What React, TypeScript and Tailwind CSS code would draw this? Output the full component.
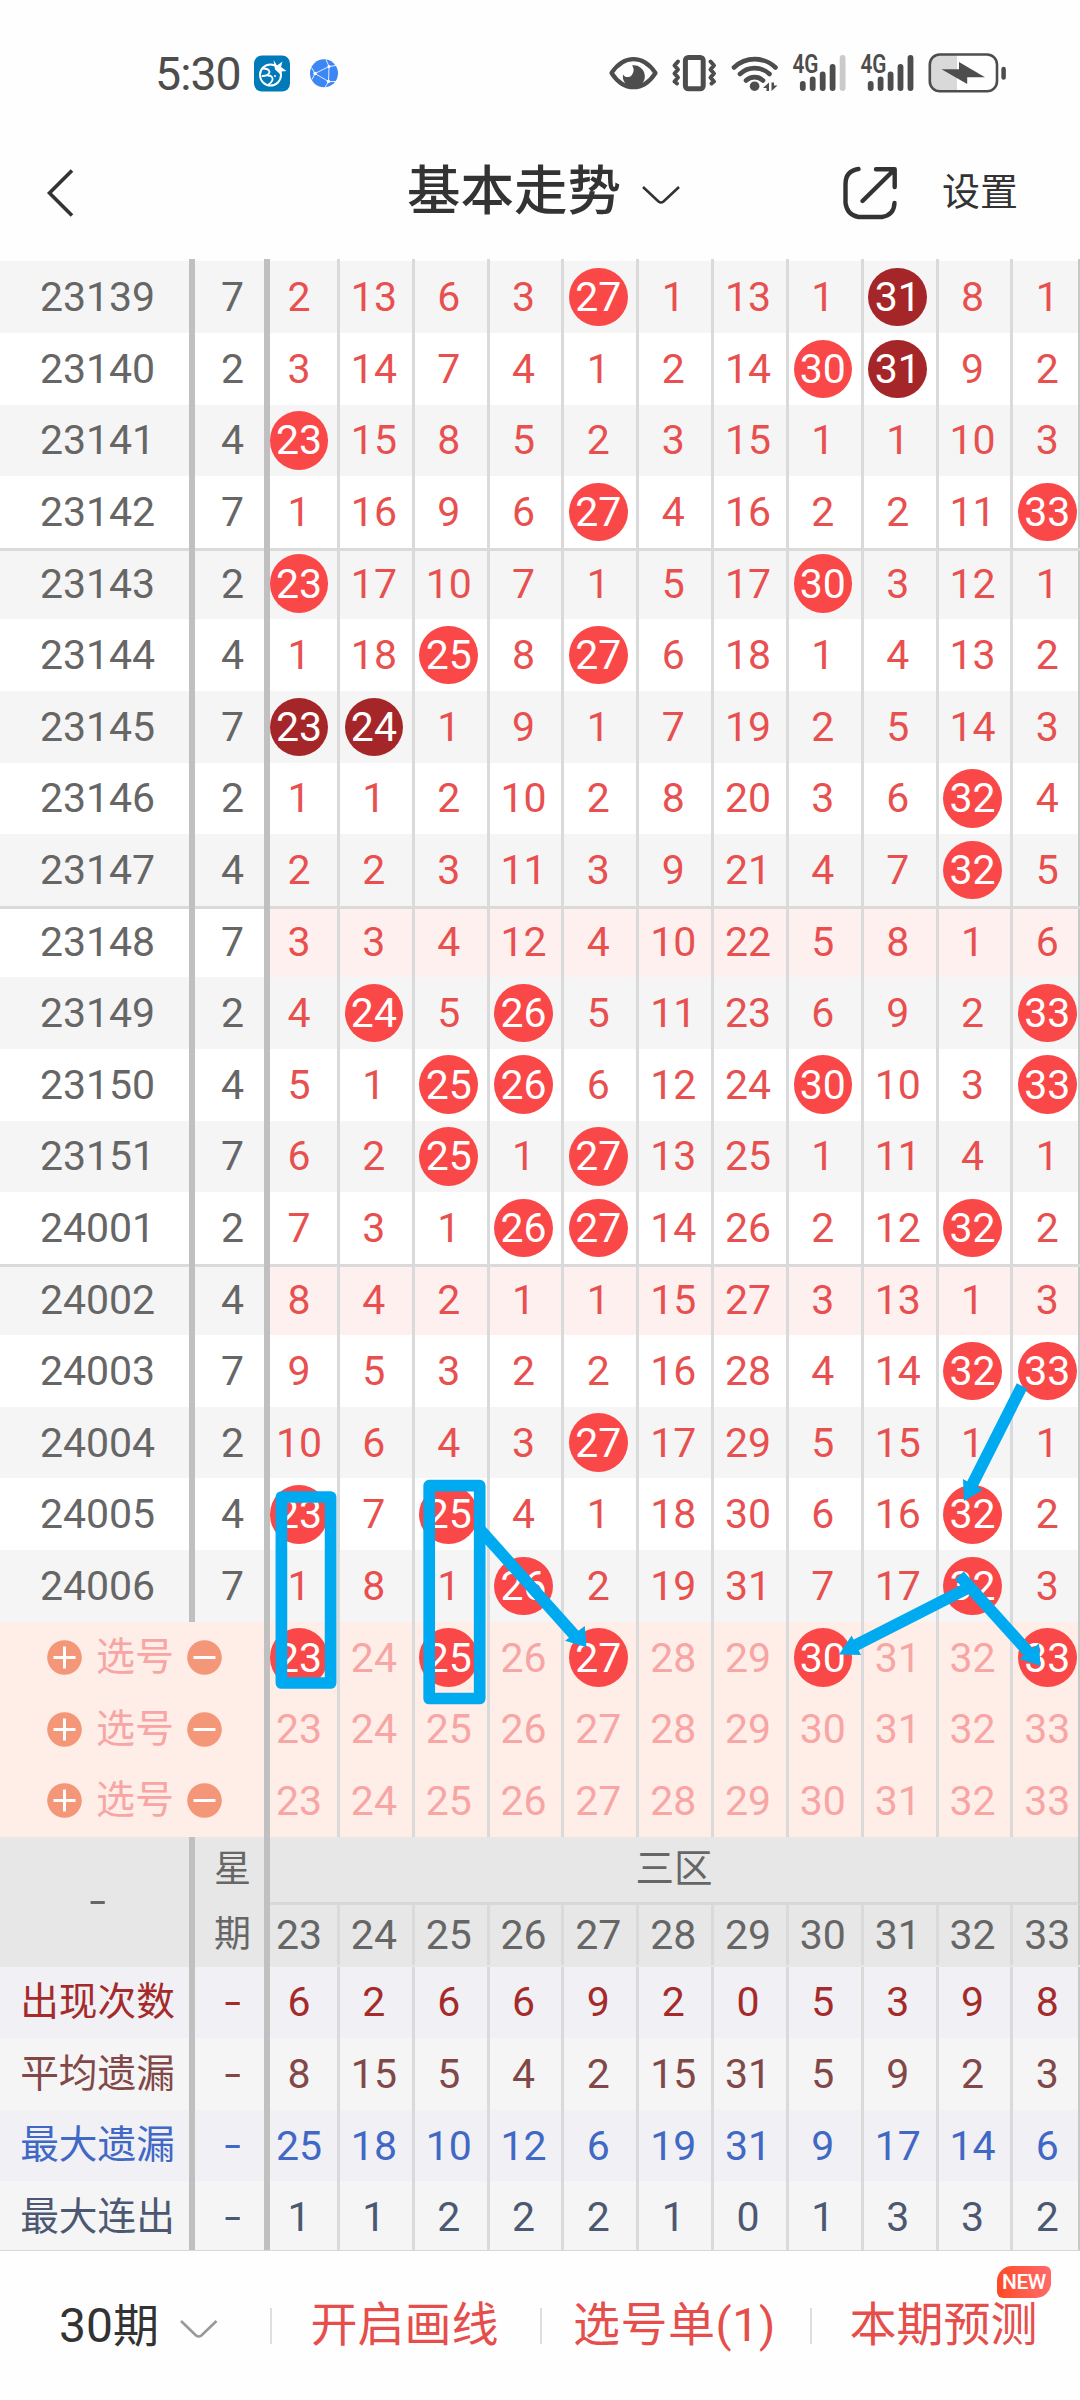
import React from "react";

const DIGITS = "font-[Roboto,'Noto_Sans_CJK_SC',sans-serif]";

/* A leading "*" marks a drawn ball, "#" a ball that belongs to a consecutive repeat. */
const DRAWS: string[] = [
  "23139 7 2 13 6 3 *27 1 13 1 #31 8 1",
  "23140 2 3 14 7 4 1 2 14 *30 #31 9 2",
  "23141 4 *23 15 8 5 2 3 15 1 1 10 3",
  "23142 7 1 16 9 6 *27 4 16 2 2 11 *33",
  "23143 2 *23 17 10 7 1 5 17 *30 3 12 1",
  "23144 4 1 18 *25 8 *27 6 18 1 4 13 2",
  "23145 7 #23 #24 1 9 1 7 19 2 5 14 3",
  "23146 2 1 1 2 10 2 8 20 3 6 *32 4",
  "23147 4 2 2 3 11 3 9 21 4 7 *32 5",
  "23148 7 3 3 4 12 4 10 22 5 8 1 6",
  "23149 2 4 *24 5 *26 5 11 23 6 9 2 *33",
  "23150 4 5 1 *25 *26 6 12 24 *30 10 3 *33",
  "23151 7 6 2 *25 1 *27 13 25 1 11 4 1",
  "24001 2 7 3 1 *26 *27 14 26 2 12 *32 2",
  "24002 4 8 4 2 1 1 15 27 3 13 1 3",
  "24003 7 9 5 3 2 2 16 28 4 14 *32 *33",
  "24004 2 10 6 4 3 *27 17 29 5 15 1 1",
  "24005 4 *23 7 *25 4 1 18 30 6 16 *32 2",
  "24006 7 1 8 1 *26 2 19 31 7 17 *32 3",
];

const PICKS: string[] = [
  "*23 24 *25 26 *27 28 29 *30 31 32 *33",
  "23 24 25 26 27 28 29 30 31 32 33",
  "23 24 25 26 27 28 29 30 31 32 33",
];

const STATS = [
  { label: "出现次数", color: "text-[#a52a2a]", bg: "bg-[#f0f0f5]", v: "6 2 6 6 9 2 0 5 3 9 8" },
  { label: "平均遗漏", color: "text-[#824848]", bg: "bg-[#f5f5f5]", v: "8 15 5 4 2 15 31 5 9 2 3" },
  { label: "最大遗漏", color: "text-[#4068c4]", bg: "bg-[#f0f0f5]", v: "25 18 10 12 6 19 31 9 17 14 6" },
  { label: "最大连出", color: "text-[#4c5872]", bg: "bg-[#f5f5f5]", v: "1 1 2 2 2 1 0 1 3 3 2" },
];

function Cells({ values, bg, color }: { values: string[]; bg: string; color: string }) {
  return (
    <div className={`flex min-w-0 flex-1 overflow-hidden border-r-2 border-[#c8c8c8] ${bg} ${color}`}>
      {values.map((v, i) => {
        const mark = v[0];
        const ball = mark === "*" || mark === "#";
        return (
          <div
            key={i}
            className={`flex h-full shrink-0 items-center border-[#dadada] ${
              i === 0 ? "w-[69.9px] border-r-[3px]" : i === 10 ? "w-[68px]" : "w-[74.84px] border-r-[3px]"
            }`}
          >
            <div className={`flex shrink-0 justify-center ${i === 0 ? "w-[58px]" : "w-[68px]"}`}>
              {ball ? (
                <span
                  className={`flex size-[58.5px] shrink-0 items-center justify-center rounded-full text-white ${
                    mark === "#" ? "bg-[#a52629]" : "bg-[#fa4848]"
                  }`}
                >
                  <span className="pt-px">{v.slice(1)}</span>
                </span>
              ) : (
                <span className="pt-px">{v}</span>
              )}
            </div>
          </div>
        );
      })}
    </div>
  );
}

function Lead({ a, b, bg, color }: { a: string; b: string; bg: string; color: string }) {
  return (
    <div className={`flex w-[270px] shrink-0 ${bg} ${color}`}>
      <div className="flex w-[195px] items-center justify-center border-r-[6px] border-[#c0c0c0] pl-[6px] pt-px">{a}</div>
      <div className="flex w-[75px] items-center justify-center border-r-[6px] border-[#c0c0c0] pl-[6px] pt-px">{b}</div>
    </div>
  );
}

function Dash() {
  return <span className="inline-block scale-x-[1.45]">-</span>;
}

function Plus({ minus = false }: { minus?: boolean }) {
  return (
    <svg className="size-[35px] shrink-0" viewBox="0 0 35 35">
      <circle cx="17.5" cy="17.5" r="17.3" fill="#f49678" />
      <path d={minus ? "M6.5 17.5h22" : "M6.5 17.5h22M17.5 6.5v22"} stroke="#fff" strokeWidth="3" />
    </svg>
  );
}

function StatusIcons() {
  return (
    <svg className="h-[50px] w-[410px]" viewBox="600 48 410 50" fill="none" stroke="#4d4d4d">
      <path d="M611.5 73C624 54.5 643 54.5 655.500 73C643 92 624 92 611.500 73Z" strokeWidth="4.200" strokeLinejoin="round" />
      <path d="M632 65.500a11 11 0 1 1 -9 9c1.500 3 6 3.500 8.500 1c2.500-3 3-7 .5-10z" fill="#4d4d4d" stroke="none" />
      <rect x="685.400" y="57.400" width="17.800" height="31.400" rx="3" strokeWidth="5" />
      <path d="M678 62l-3.500 4l3.500 4l-3.500 4l3.500 4l-3.500 4l2.500 2M710.500 62l3.500 4l-3.500 4l3.500 4l-3.500 4l3.500 4l-2.500 2" transform="translate(0 -.5)" strokeWidth="4" strokeLinejoin="round" strokeLinecap="round" />
      <path d="M734 67.500a30 30 0 0 1 41.500 0M740 74a21.500 21.500 0 0 1 29.500 0M746 80.500a12.500 12.500 0 0 1 17 0" strokeWidth="4.600" strokeLinecap="round" />
      <circle cx="754.600" cy="86.200" r="4.800" fill="#4d4d4d" stroke="none" />
      <path d="M763 88l6-5.500v8.500h-2.500v-3zM777.500 85.500l-6 5.500v-8.500h2.500v3z" fill="#4d4d4d" stroke="none" />
      {[0, 67.9].map((dx, n) => (
        <g key={n} strokeWidth="5.800" strokeLinecap="round" transform={`translate(${dx} 0)`}>
          <path d="M802.800 84v4M812.700 79.500v8.500M822.700 74.500v13.500M832.600 67v21" />
          <path d="M842.600 58v30" stroke={n === 0 ? "#cacaca" : "#4d4d4d"} />
          <text x="792.500" y="73" fontFamily="Roboto" fontWeight="600" fontSize="25" textLength="26" lengthAdjust="spacingAndGlyphs" fill="#4d4d4d" stroke="none">4G</text>
        </g>
      ))}
      <path d="M957 55h-17a10 10 0 0 0-10 10v16a10 10 0 0 0 10 10h17z" fill="#d9d9d9" stroke="none" />
      <rect x="929.800" y="54.500" width="67.200" height="36.800" rx="10" strokeWidth="2.600" />
      <path d="M941.500 69.300H959V62L985 77.200H967.200V84z" fill="#4d4d4d" stroke="none" />
      <path d="M1003.600 69v8.500" strokeWidth="4.500" strokeLinecap="round" />
    </svg>
  );
}

function Annotations() {
  return (
    <svg className="pointer-events-none absolute left-0 top-0 h-[1992px] w-[1080px]" viewBox="0 259 1080 1992" fill="none" stroke="#00aaf0" strokeWidth="11.700">
      <rect x="281.400" y="1497" width="49.200" height="186" strokeLinejoin="round" />
      <rect x="429.200" y="1485.600" width="50.500" height="212.900" strokeLinejoin="round" />
      <path d="M480 1529.500L577 1638M1022 1386L971 1487M968 1588L854 1646M959.400 1575.500L1031 1655" />
      <g fill="#00aaf0" stroke="none">
        <path d="M586.500 1647.300L565 1640.700L584.800 1626z" />
        <path d="M964 1501L963 1479L982.800 1490z" />
        <path d="M839 1654.500L851.600 1635.500L861 1655z" />
        <path d="M1040.500 1665.700L1019.300 1659L1039 1643.500z" />
      </g>
    </svg>
  );
}

function Bar() {
  return <span className="h-[36px] w-[2px] shrink-0 bg-[#dedede]" />;
}

export default function App() {
  return (
    <div className={`flex h-[2400px] w-[1080px] flex-col overflow-hidden bg-[#fefefe] text-[41px] leading-none ${DIGITS}`}>
      <div className="flex h-[146px] shrink-0 items-center pl-[155px] pr-[70px]">
        <span className="w-[99px] pt-[2px] text-[46.500px] tracking-[-1px] text-[#4d4d4d]">5:30</span>
        <svg className="h-[38px] w-[90px]" viewBox="254 54.500 90 38" fill="none">
          <rect x="254" y="56" width="36" height="36" rx="8" fill="#007ab8" />
          <circle cx="270.500" cy="75.500" r="10.500" stroke="#fff" strokeWidth="2" />
          <path d="M263 69q6 0 6.500 3.500q-1 4-7 4M268 76q5 0 4.500 4.500q-1 3-4 4.500" stroke="#fff" strokeWidth="1.800" strokeLinecap="round" />
          <path d="M275 70l-1.500-9.500l3.500 5.500l5.500-4l-1.500 5.500l5.500 4l-5 .5l-1 3z" fill="#fff" />
          <circle cx="275" cy="76.500" r="1" fill="#fff" />
          <circle cx="324" cy="73.800" r="14" fill="#3d86f5" />
          <path d="M315 74L329 67L328.500 82Z M311.500 68L315 74L312 80M326 60L329 67L336 66M337 82H328.500L325 88" stroke="#fff" strokeOpacity=".85" strokeWidth="1" />
          <g fill="#fff"><circle cx="315" cy="74" r="1.700" /><circle cx="329" cy="67" r="1.500" /><circle cx="328.500" cy="82" r="1.700" /></g>
        </svg>
        <div className="ml-auto"><StatusIcons /></div>
      </div>

      <div className="flex h-[113px] shrink-0 pt-[15px] text-[#333]">
        <svg className="ml-[46px] mt-[6px] h-[52px] w-[28px] shrink-0" viewBox="46 167 28 52" fill="none" stroke="#333" strokeWidth="3.600">
          <path d="M72 170.500L49.500 193L72 215.500" />
        </svg>
        <h1 className="ml-[333px] mt-px w-[234px] shrink-0 text-[53.500px] font-medium leading-[60px]">基本走势</h1>
        <svg className="mt-[24px] h-[20px] w-[40px] shrink-0" viewBox="641 185 40 20" fill="none" stroke="#333" strokeWidth="2.600">
          <path d="M643 187L658.500 201.500Q661 203.500 663.500 201.500L679 187" />
        </svg>
        <svg className="ml-[161px] mt-[3px] h-[56px] w-[56px] shrink-0" viewBox="842 164 56 56" fill="none" stroke="#333" strokeWidth="4.400" strokeLinecap="round" strokeLinejoin="round">
          <path d="M858.500 169Q845.500 171 845.500 184V203Q847 215 858.500 217H882Q894 215 894.500 203M876 169.200H894.700V187M894 170L862.500 201" />
        </svg>
        <span className="ml-[44px] mt-[1px] text-[38px] leading-[60px]">设置</span>
      </div>

      <div className="relative shrink-0">
        <div className="flex h-[2.400px]">
          <Lead a="" b="" bg="" color="" />
          <Cells values={Array(11).fill("")} bg="" color="" />
        </div>
        {DRAWS.map((line, i) => {
          const [id, day, ...v] = line.split(" ");
          const bg = i % 2 === 0 ? "bg-[#f5f5f5]" : "bg-white";
          const pink = i === 9 || i === 14;
          const rule = i === 4 || pink;
          return (
            <div key={id} className="relative flex h-[71.600px]">
              <Lead a={id} b={day} bg={bg} color="text-[#666]" />
              <Cells values={v} bg={pink ? "bg-[#fff0f0]" : bg} color="text-[#e85050]" />
              {rule && (
                <div className="absolute inset-x-0 top-0 flex h-[3px] bg-[#dadada]">
                  <span className="ml-[189px] w-[6px] bg-[#c0c0c0]" />
                  <span className="ml-[69px] w-[6px] bg-[#c0c0c0]" />
                </div>
              )}
            </div>
          );
        })}
        {PICKS.map((line, i) => (
          <div key={i} className="flex h-[71.670px] bg-[#feeee7]">
            <div className="flex w-[270px] shrink-0 items-center border-r-[6px] border-[#c0c0c0] pl-[47px] text-[39px] text-[#f8a5a5]">
              <Plus />
              <span className="ml-[14px] w-[91px]">选号</span>
              <Plus minus />
            </div>
            <Cells values={line.split(" ")} bg="bg-[#feeee7]" color="text-[#f8a5a5]" />
          </div>
        ))}
        <div className="flex h-[130px] bg-[#e7e7e7] text-[#666]">
          <div className="flex w-[195px] shrink-0 items-center justify-center border-r-[6px] border-[#c0c0c0] pl-[6px]"><Dash /></div>
          <div className="flex w-[75px] shrink-0 flex-col items-center border-r-[6px] border-[#c0c0c0] pl-[6px] text-[37px] leading-[65px]">
            <span>星</span>
            <span>期</span>
          </div>
          <div className="flex min-w-0 flex-1 flex-col">
            <div className="flex h-[68px] items-center justify-center border-b-[3px] border-r-2 border-b-[#d8d8d8] border-r-[#c8c8c8] text-[38.500px]">三区</div>
            <div className="flex h-[62px] pb-[2px]">
              <Cells values={PICKS[1].split(" ")} bg="" color="" />
            </div>
          </div>
        </div>
        {STATS.map((s, i) => (
          <div key={s.label} className={i === 3 ? "h-[69px] overflow-hidden" : "h-[71.600px]"}>
            <div className="flex h-[71.600px]">
              <div className={`flex w-[195px] shrink-0 items-center justify-center border-r-[6px] border-[#c0c0c0] pl-[6px] text-[38.700px] ${s.bg} ${s.color}`}>{s.label}</div>
              <div className={`flex w-[75px] shrink-0 items-center justify-center border-r-[6px] border-[#c0c0c0] pl-[6px] ${s.bg} ${s.color}`}><Dash /></div>
              <Cells values={s.v.split(" ")} bg={s.bg} color={s.color} />
            </div>
          </div>
        ))}
        <div className="h-px bg-[#d8d8d8]" />
        <Annotations />
      </div>

      <div className="flex h-[149px] shrink-0 items-center text-[47px] text-[#e64e4c]">
        <div className="flex w-[270px] shrink-0 items-center pl-[59px] text-[#333]">
          <span className="w-[120px] whitespace-nowrap"><span className="text-[48px]">30</span><span className="text-[46px]">期</span></span>
          <svg className="mt-[6px] h-[20px] w-[40px]" viewBox="179 2319 40 20" fill="none" stroke="#999" strokeWidth="2.600">
            <path d="M181 2321L196 2335.500Q198.700 2337.500 201.400 2335.500L216.500 2321" />
          </svg>
        </div>
        <Bar />
        <div className="flex w-[268px] justify-center pb-[2px] pr-[3px]">开启画线</div>
        <Bar />
        <div className="flex w-[268px] justify-center whitespace-nowrap pb-[2px] pr-[3px] tracking-[0.500px]">选号单(1)</div>
        <Bar />
        <div className="relative flex w-[268px] justify-center pb-[2px] pr-[5px]">
          本期预测
          <span className="absolute right-[29px] top-[-35px] flex h-[32px] w-[54px] items-center justify-center rounded-[6px] rounded-br-[15px] rounded-tl-[15px] bg-gradient-to-r from-[#ff4a20] to-[#ff6a68] text-[21px] font-medium tracking-[-0.500px] text-white">NEW</span>
        </div>
      </div>
    </div>
  );
}
